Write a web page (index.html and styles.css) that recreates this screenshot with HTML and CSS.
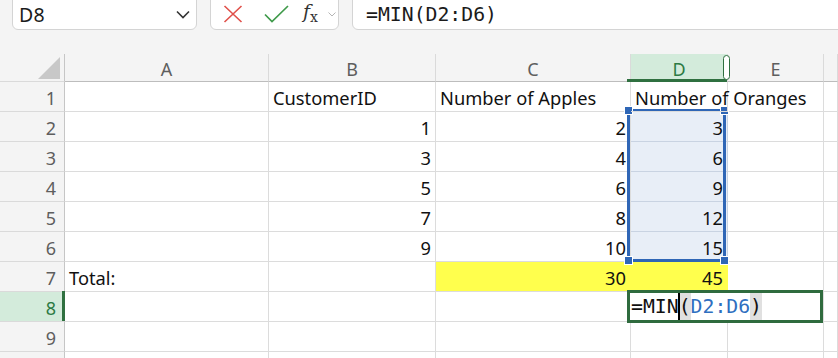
FILE: index.html
```html
<!DOCTYPE html>
<html>
<head>
<meta charset="utf-8">
<link rel="stylesheet" href="styles.css">
</head>
<body>
<div class="app">
  <div class="toolbar">
    <div class="namebox">
      <span class="name">D8</span>
      <svg class="chev" width="14" height="9" viewBox="0 0 14 9"><path d="M1 1.5 L7 7.5 L13 1.5" fill="none" stroke="#333" stroke-width="1.6"/></svg>
    </div>
    <div class="fxbox">
      <svg class="ico" width="20" height="18" viewBox="0 0 20 18"><path d="M1.5 1 L18.5 17 M18.5 1 L1.5 17" stroke="#e0504a" stroke-width="1.6" fill="none"/></svg>
      <svg class="ico" width="25" height="18" viewBox="0 0 25 18"><path d="M1 9.5 L8 16.5 L24 1" stroke="#3f9a4a" stroke-width="1.7" fill="none"/></svg>
      <span class="fx"><i>f</i><sub>x</sub></span>
      <svg class="chev-s" width="8" height="5" viewBox="0 0 8 5"><path d="M0.5 0.5 L4 4 L7.5 0.5" fill="none" stroke="#b5b5b5" stroke-width="1"/></svg>
    </div>
    <div class="formula">=MIN(D2:D6)</div>
  </div>

  <div class="sheet">
    <div class="grid">
      <div class="hd corner"><svg width="22" height="22" viewBox="0 0 22 22"><path d="M22 0 L22 22 L0 22 Z" fill="#c8c8c8"/></svg></div>
      <div class="hd col">A</div>
      <div class="hd col">B</div>
      <div class="hd col">C</div>
      <div class="hd col colsel">D</div>
      <div class="hd col">E</div>
      <div class="hd col"></div>

      <div class="hd row">1</div>
      <div class="c"></div>
      <div class="c">CustomerID</div>
      <div class="c">Number of Apples</div>
      <div class="c over">Number of Oranges</div>
      <div class="c"></div>
      <div class="c"></div>

      <div class="hd row">2</div>
      <div class="c"></div>
      <div class="c n">1</div>
      <div class="c n">2</div>
      <div class="c n sel">3</div>
      <div class="c"></div>
      <div class="c"></div>

      <div class="hd row">3</div>
      <div class="c"></div>
      <div class="c n">3</div>
      <div class="c n">4</div>
      <div class="c n sel">6</div>
      <div class="c"></div>
      <div class="c"></div>

      <div class="hd row">4</div>
      <div class="c"></div>
      <div class="c n">5</div>
      <div class="c n">6</div>
      <div class="c n sel">9</div>
      <div class="c"></div>
      <div class="c"></div>

      <div class="hd row">5</div>
      <div class="c"></div>
      <div class="c n">7</div>
      <div class="c n">8</div>
      <div class="c n sel">12</div>
      <div class="c"></div>
      <div class="c"></div>

      <div class="hd row">6</div>
      <div class="c"></div>
      <div class="c n">9</div>
      <div class="c n">10</div>
      <div class="c n sel">15</div>
      <div class="c"></div>
      <div class="c"></div>

      <div class="hd row">7</div>
      <div class="c">Total:</div>
      <div class="c"></div>
      <div class="c n yel">30</div>
      <div class="c n yel">45</div>
      <div class="c"></div>
      <div class="c"></div>

      <div class="hd row rowsel">8</div>
      <div class="c"></div>
      <div class="c"></div>
      <div class="c"></div>
      <div class="c"></div>
      <div class="c"></div>
      <div class="c"></div>

      <div class="hd row">9</div>
      <div class="c"></div>
      <div class="c"></div>
      <div class="c"></div>
      <div class="c"></div>
      <div class="c"></div>
      <div class="c"></div>

      <div class="hd row"></div>
      <div class="c"></div>
      <div class="c"></div>
      <div class="c"></div>
      <div class="c"></div>
      <div class="c"></div>
      <div class="c"></div>
    </div>

    <div class="col-bar"></div>
    <div class="col-handle"></div>
    <div class="row-bar"></div>

    <div class="sel-box"></div>
    <div class="hdl h-tl"></div>
    <div class="hdl h-tr"></div>
    <div class="hdl h-bl"></div>
    <div class="hdl h-br"></div>

    <div class="active"><span class="mono">=MIN<span class="caret"></span><span class="par">(</span><span class="ref">D2:D6</span><span class="par">)</span></span></div>
  </div>
</div>
</body>
</html>
```

FILE: styles.css
```css
* { box-sizing: border-box; }
html, body { margin: 0; padding: 0; }
body {
  width: 838px;
  height: 358px;
  overflow: hidden;
  background: #f4f4f4;
  font-family: "Noto Sans", "Open Sans", sans-serif;
}
.app { width: 838px; height: 358px; overflow: hidden; }

.toolbar {
  height: 54px;
  display: flex;
  align-items: flex-start;
  gap: 13px;
  padding-left: 12px;
}
.namebox, .fxbox, .formula {
  margin-top: -8px;
  height: 38px;
  background: #fff;
  border: 1px solid #d4d4d4;
  border-radius: 6px;
  display: flex;
  align-items: center;
  padding-top: 6px;
}
.namebox {
  width: 185px;
  flex: none;
  padding-left: 6px;
  padding-right: 6px;
  justify-content: space-between;
}
.name { font-size: 19.5px; color: #1b1b1b; letter-spacing: 0.2px; }
.chev { margin-top: 1px; }
.fxbox {
  width: 129px;
  flex: none;
  padding-left: 12px;
}
.fxbox .ico:nth-child(2) { margin-left: 21px; }
.fx {
  margin-left: 14px;
  font-family: "DejaVu Serif", serif;
  font-size: 19px;
  color: #333;
  line-height: 1;
  margin-top: -2px;
}
.fx i { font-style: italic; }
.fx sub { font-size: 14px; vertical-align: -4px; font-style: normal; }
.chev-s { margin-left: 10px; }
.formula {
  flex: 1;
  margin-right: -20px;
  padding-left: 13px;
  font-family: "DejaVu Sans Mono", monospace;
  font-size: 19.8px;
  color: #1b1b1b;
}

.sheet { position: relative; }
.grid {
  display: grid;
  grid-template-columns: 65px 204px 167px 195px 97px 96px 1fr;
  grid-template-rows: 28px repeat(10, 30px);
  background: #fff;
  font-size: 18.3px;
}
.hd {
  background: #f4f4f4;
  color: #5e5e5e;
  border-right: 1px solid #dadada;
  border-bottom: 1px solid #dadada;
  display: flex;
  align-items: center;
}
.corner { justify-content: flex-end; align-items: flex-end; padding: 0 4px 2px 0; border-right: 1px solid #c6c6c6; }
.col { justify-content: center; border-bottom-color: #bdbdbd; font-size: 18px; padding-top: 2px; }
.row { justify-content: flex-end; padding-right: 8px; border-right-color: #c6c6c6; padding-top: 2px; font-size: 18px; }
.colsel { background: #d3ebdb; color: #2c7a44; }
.rowsel { background: #d3ebdb; color: #2c7a44; }

.c {
  border-right: 1px solid #dcdcdc;
  border-bottom: 1px solid #dcdcdc;
  display: flex;
  align-items: flex-end;
  padding: 0 4px 1px 4px;
  color: #111;
  white-space: nowrap;
  line-height: 25px;
}
.over { overflow: visible; position: relative; z-index: 1; }
.n { justify-content: flex-end; }
.sel { background: #e8eef7; border-bottom-color: #c9d3e2; border-right-color: #c9d3e2; }
.yel { background: #ffff4d; border-right-color: #ffff4d; border-bottom-color: #dcdcdc; }

.col-bar {
  position: absolute;
  left: 627px; top: 25px;
  width: 100px; height: 3px;
  background: #2f7040;
}
.col-handle {
  position: absolute;
  left: 723px; top: 1px;
  width: 7px; height: 25px;
  border: 1.5px solid #2f7040;
  border-radius: 4px;
  background: #fff;
}
.row-bar {
  position: absolute;
  left: 62px; top: 237px;
  width: 3px; height: 30px;
  background: #2f7040;
}
.sel-box {
  position: absolute;
  left: 627px; top: 55px;
  width: 99px; height: 153px;
  border: 3px solid #2f66b6;
  pointer-events: none;
}
.hdl {
  position: absolute;
  width: 9px; height: 9px;
  background: #2f66b6;
  border: 1px solid #fff;
}
.h-tl { left: 624px; top: 52px; }
.h-tr { left: 720px; top: 52px; }
.h-bl { left: 624px; top: 202px; }
.h-br { left: 720px; top: 202px; }

.active {
  position: absolute;
  left: 627px; top: 236px;
  width: 196px; height: 33px;
  border: 3px solid #2f6b3e;
  background: #fff;
  display: flex;
  align-items: center;
  padding-left: 1px;
}
.mono {
  font-family: "DejaVu Sans Mono", monospace;
  font-size: 19.8px;
  color: #111;
  line-height: 27px;
  display: flex;
  align-items: stretch;
}
.caret {
  display: inline-block;
  width: 2px;
  margin: 0 -1px;
  background: #000;
  position: relative;
  z-index: 1;
}
.par { background: #e0e0e0; }
.ref { color: #2f6fc0; }
```
